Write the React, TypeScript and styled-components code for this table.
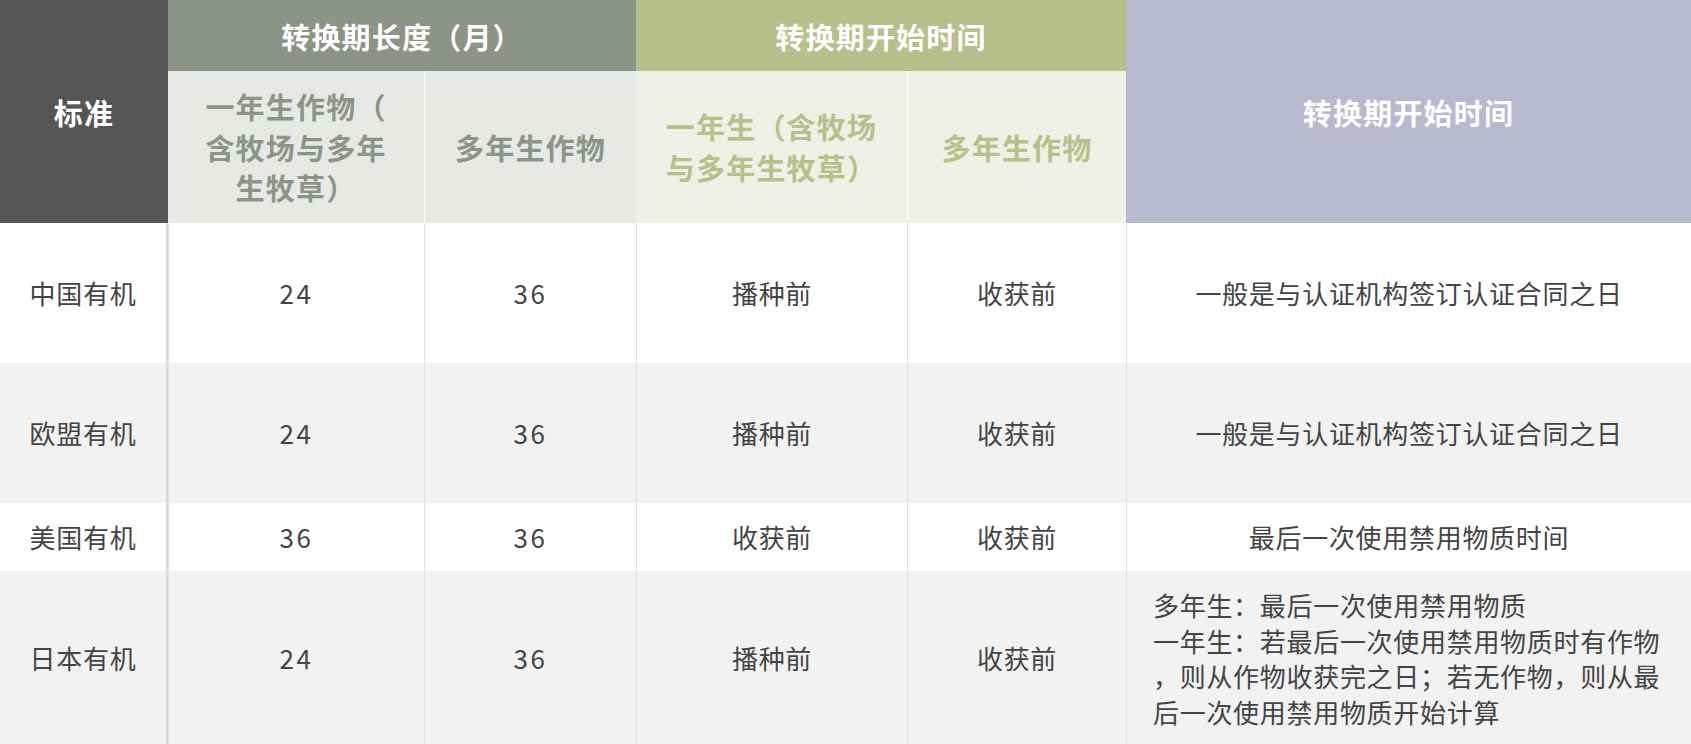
import React from 'react';
import styled, { createGlobalStyle, css } from 'styled-components';

const GlobalStyle = createGlobalStyle`
  html, body {
    margin: 0;
    padding: 0;
    background: #ffffff;
  }
  body {
    font-family: "Noto Sans CJK SC", "Noto Sans", sans-serif;
    text-spacing-trim: space-all;
  }
`;

const colors = {
  dark: '#555555',
  olive: '#8b9585',
  oliveSoft: '#e7e9e5',
  lime: '#b5c08a',
  limeSoft: '#eff1e7',
  lavender: '#b7b9cf',
  text: '#444444',
  stripe: '#f2f2f2',
  rule: '#e3e3e3',
};

const Grid = styled.div`
  display: grid;
  width: 1691px;
  grid-template-columns: 168px 256px 212px 271px 219px 565px;
  grid-template-rows: 71px 152px 140px 140px 68px auto;
`;

const cellBase = css`
  box-sizing: border-box;
  display: flex;
  align-items: center;
  justify-content: center;
  text-align: center;
`;

const headFont = css`
  font-size: 29px;
  font-weight: 700;
  letter-spacing: 1.2px;
`;

const Corner = styled.div`
  ${cellBase};
  ${headFont};
  grid-row: 1 / span 2;
  background: ${colors.dark};
  color: #ffffff;
`;

const GroupHead = styled.div<{ $bg: string; $span: number; $rows?: number }>`
  ${cellBase};
  ${headFont};
  grid-column: span ${({ $span }) => $span};
  grid-row: span ${({ $rows }) => $rows ?? 1};
  background: ${({ $bg }) => $bg};
  color: #ffffff;
`;

const SubHead = styled.div<{ $bg: string; $fg: string; $divider?: boolean }>`
  ${cellBase};
  ${headFont};
  padding: 0 26px;
  background: ${({ $bg }) => $bg};
  color: ${({ $fg }) => $fg};
  line-height: 1.4;
  line-break: anywhere;
  border-left: ${({ $divider }) => ($divider ? '1px solid #ffffff' : 'none')};
`;

const Cell = styled.div<{ $shade: boolean; $first?: boolean; $wide?: boolean }>`
  ${cellBase};
  padding: 16px 26px;
  background: ${({ $shade }) => ($shade ? colors.stripe : '#ffffff')};
  color: ${colors.text};
  font-size: 26px;
  letter-spacing: 0.7px;
  line-height: 1.37;
  border-left: ${({ $first }) => ($first ? 'none' : `1px solid ${colors.rule}`)};
  border-right: ${({ $first }) => ($first ? '2px solid #d9d9d9' : 'none')};
  ${({ $wide }) =>
    $wide &&
    css`
      justify-content: flex-start;
      text-align: left;
      line-break: anywhere;
    `}
`;

const Num = styled.span`
  letter-spacing: 2.5px;
`;

const Lines = styled.div`
  display: flex;
  flex-direction: column;
`;

type Row = {
  name: string;
  annual: string;
  perennial: string;
  startAnnual: string;
  startPerennial: string;
  start: string[];
};

const rows: Row[] = [
  { name: '中国有机', annual: '24', perennial: '36', startAnnual: '播种前', startPerennial: '收获前', start: ['一般是与认证机构签订认证合同之日'] },
  { name: '欧盟有机', annual: '24', perennial: '36', startAnnual: '播种前', startPerennial: '收获前', start: ['一般是与认证机构签订认证合同之日'] },
  { name: '美国有机', annual: '36', perennial: '36', startAnnual: '收获前', startPerennial: '收获前', start: ['最后一次使用禁用物质时间'] },
  {
    name: '日本有机',
    annual: '24',
    perennial: '36',
    startAnnual: '播种前',
    startPerennial: '收获前',
    start: ['多年生：最后一次使用禁用物质', '一年生：若最后一次使用禁用物质时有作物，则从作物收获完之日；若无作物，则从最后一次使用禁用物质开始计算'],
  },
];

export default function App() {
  return (
    <>
      <GlobalStyle />
      <Grid>
        <Corner>标准</Corner>
        <GroupHead $bg={colors.olive} $span={2}>转换期长度（月）</GroupHead>
        <GroupHead $bg={colors.lime} $span={2}>转换期开始时间</GroupHead>
        <GroupHead $bg={colors.lavender} $span={1} $rows={2}>转换期开始时间</GroupHead>

        <SubHead $bg={colors.oliveSoft} $fg={colors.olive}>一年生作物（含牧场与多年生牧草）</SubHead>
        <SubHead $bg={colors.oliveSoft} $fg={colors.olive} $divider>多年生作物</SubHead>
        <SubHead $bg={colors.limeSoft} $fg={colors.lime}>一年生（含牧场与多年生牧草）</SubHead>
        <SubHead $bg={colors.limeSoft} $fg={colors.lime} $divider>多年生作物</SubHead>

        {rows.map((row, i) => {
          const shade = i % 2 === 1;
          const multi = row.start.length > 1;
          return (
            <React.Fragment key={row.name}>
              <Cell $shade={shade} $first>{row.name}</Cell>
              <Cell $shade={shade}><Num>{row.annual}</Num></Cell>
              <Cell $shade={shade}><Num>{row.perennial}</Num></Cell>
              <Cell $shade={shade}>{row.startAnnual}</Cell>
              <Cell $shade={shade}>{row.startPerennial}</Cell>
              <Cell $shade={shade} $wide={multi}>
                {multi ? (
                  <Lines>
                    {row.start.map((line) => (
                      <span key={line}>{line}</span>
                    ))}
                  </Lines>
                ) : (
                  row.start[0]
                )}
              </Cell>
            </React.Fragment>
          );
        })}
      </Grid>
    </>
  );
}
